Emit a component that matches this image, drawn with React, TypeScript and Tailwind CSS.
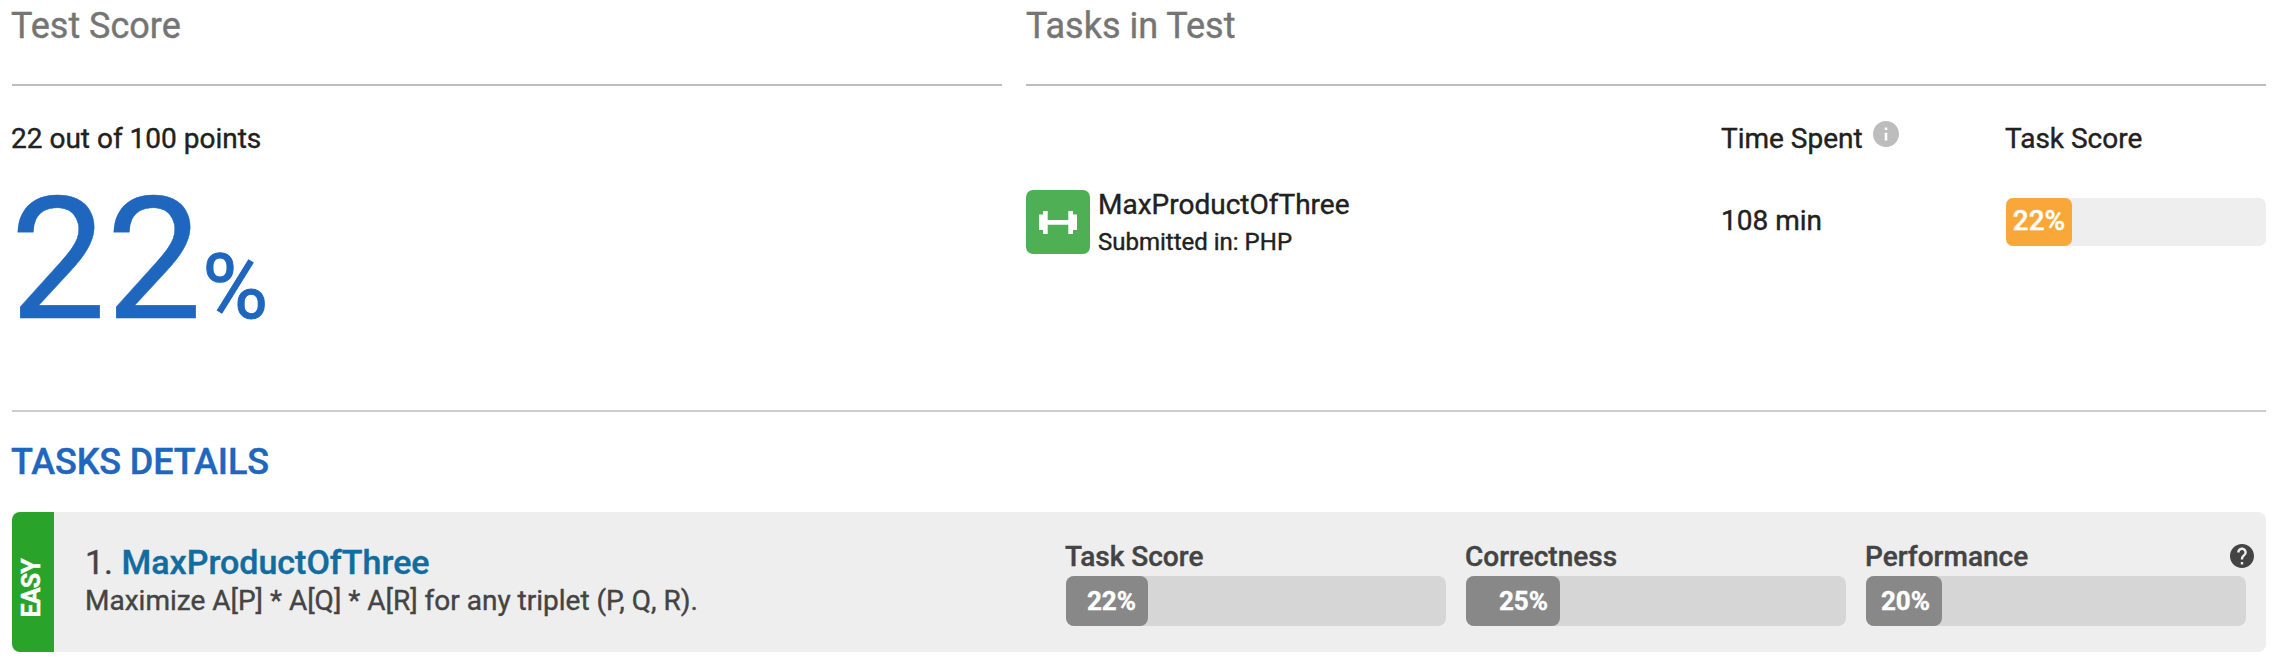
import React from "react";

const Meter = ({ label, value, fill, help }: { label: string; value: string; fill: number; help?: boolean }) => (
  <div className="relative w-[380px]">
    <div className="-ml-px pt-px text-[28px] font-medium leading-[32px] text-[#444]">{label}</div>
    <div className="mt-[3px] h-[50px] rounded-[8px] bg-[#d6d6d6]">
      <div
        className="flex h-[50px] items-center justify-end rounded-[8px] bg-[#888] pr-3 text-[26px] font-bold leading-[50px] text-white"
        style={{ width: fill }}
      >
        {value}
      </div>
    </div>
    {help && (
      <svg className="absolute -right-2 top-1 h-6 w-6" viewBox="2 2 20 20">
        <path
          fill="#444"
          d="M12 2C6.48 2 2 6.48 2 12s4.48 10 10 10 10-4.48 10-10S17.52 2 12 2zm1 17h-2v-2h2v2zm2.07-7.75l-.9.92C13.45 12.9 13 13.5 13 15h-2v-.5c0-1.1.45-2.1 1.17-2.83l1.24-1.26c.37-.36.59-.86.59-1.41 0-1.1-.9-2-2-2s-2 .9-2 2H8c0-2.21 1.79-4 4-4s4 1.79 4 4c0 .88-.36 1.68-.93 2.25z"
        />
      </svg>
    )}
  </div>
);

export default function App() {
  return (
    <div className="h-[664px] w-[2278px] overflow-hidden bg-white px-3 font-['Roboto',sans-serif] text-[#212121] [-webkit-text-stroke:0.4px]">
      <div className="flex h-[410px] w-[2254px] gap-6">
        <section className="w-[990px]">
          <h2 className="h-[86px] border-b-2 border-[#bdbdbd] pt-[5px] text-[36px] leading-[42px] text-[#757575]">
            <span className="-ml-px">Test Score</span>
          </h2>
          <div className="-ml-px mt-[37px] text-[28px] leading-[32px]">22 out of 100 points</div>
          <div className="-ml-[2px] mt-[4px] text-[171px] leading-[202px] text-[#1e66be]">
            22<span className="text-[90px] [-webkit-text-stroke:1px]">%</span>
          </div>
        </section>
        <section className="w-[1240px]">
          <h2 className="h-[86px] border-b-2 border-[#bdbdbd] pt-[5px] text-[36px] leading-[42px] text-[#757575]">Tasks in Test</h2>
          <div className="grid grid-cols-[695px_284px_261px] pt-[37px] text-[28px] leading-[32px]">
            <span />
            <span className="flex gap-[10px]">
              Time Spent
              <svg className="-mt-0.5 h-[26px] w-[26px]" viewBox="2 2 20 20">
                <path
                  fill="#bdbdbd"
                  d="M12 2C6.48 2 2 6.48 2 12s4.48 10 10 10 10-4.48 10-10S17.52 2 12 2zm1 15h-2v-6h2v6zm0-8h-2V7h2v2z"
                />
              </svg>
            </span>
            <span>Task Score</span>
          </div>
          <div className="mt-[35px] grid grid-cols-[695px_285px_260px] text-[28px]">
            <div className="flex">
              <div className="flex h-16 w-16 items-center justify-center rounded-[7px] bg-[#4faf55]">
                <svg className="h-6 w-[38px]" viewBox="0 0 38 24" fill="#fff">
                  <path d="M0 4.5h4V1h4.7v9h20.6V1H34v3.5h4V20h-4v4h-4.7v-9.3H8.700V24H4v-4H0z" />
                </svg>
              </div>
              <div className="ml-[8px]">
                <div className="mt-[-1px] leading-[32px]">MaxProductOfThree</div>
                <div className="mt-[7px] text-[24px] leading-[28px]">Submitted in: PHP</div>
              </div>
            </div>
            <div className="pt-[15px] leading-[32px]">108 min</div>
            <div className="mt-2 h-12 rounded-[7px] bg-[#eee]">
              <div className="h-12 w-[66px] rounded-[7px] bg-[#f8a738] text-center font-medium leading-[46px] text-white">22%</div>
            </div>
          </div>
        </section>
      </div>
      <div className="h-[102px] w-[2254px] border-t-2 border-[#ccc] pt-[29px]">
        <h2 className="-ml-px text-[36px] font-medium leading-[42px] tracking-[-0.1px] text-[#1e66be]">TASKS DETAILS</h2>
      </div>
      <div className="flex h-[140px] w-[2254px] overflow-hidden rounded-[8px] bg-[#eee] text-[#444]">
        <div className="flex w-[42px] items-center justify-center bg-[#29a329] pr-[3px] pt-[12px]">
          <span className="rotate-180 text-[25px] font-bold leading-[28px] tracking-[-0.8px] text-white [writing-mode:vertical-rl]">EASY</span>
        </div>
        <div className="w-[980px] pl-[31px] pt-[30px]">
          <div className="text-[34px] leading-[40px]">
            1. <span className="font-medium text-[#116c9f]">MaxProductOfThree</span>
          </div>
          <div className="mt-[3px] text-[28px] leading-[32px]">Maximize A[P] * A[Q] * A[R] for any triplet (P, Q, R).</div>
        </div>
        <div className="ml-8 flex gap-5 pt-[28px]">
          <Meter label="Task Score" value="22%" fill={82} />
          <Meter label="Correctness" value="25%" fill={94} />
          <Meter label="Performance" value="20%" fill={76} help />
        </div>
      </div>
    </div>
  );
}
